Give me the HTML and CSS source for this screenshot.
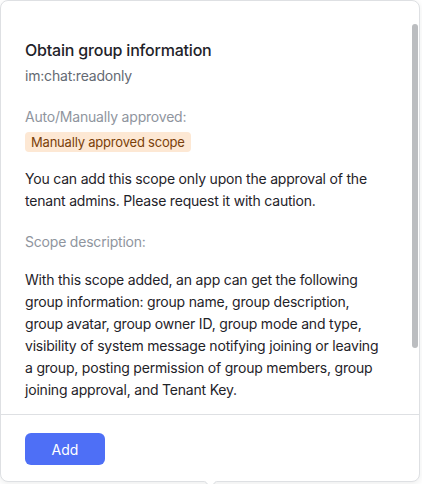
FILE: index.html
```html
<!DOCTYPE html>
<html lang="en">
<head>
<meta charset="utf-8">
<title>Obtain group information</title>
<link rel="stylesheet" href="styles.css">
</head>
<body>
<div class="card">
  <div class="content">
    <h2 class="title">Obtain group information</h2>
    <div class="code">im:chat:readonly</div>
    <div class="label">Auto/Manually approved:</div>
    <div class="tag">Manually approved scope</div>
    <p class="text">You can add this scope only upon the approval of the tenant admins. Please request it with caution.</p>
    <div class="label">Scope description:</div>
    <p class="text">With this scope added, an app can get the following group information: group name, group description, group avatar, group owner ID, group mode and type, visibility of system message notifying joining or leaving a group, posting permission of group members, group joining approval, and Tenant Key.</p>
  </div>
  <div class="footer">
    <button class="btn">Add</button>
  </div>
  <div class="scroll-thumb"></div>
  <div class="arrow"></div>
</div>
</body>
</html>
```
FILE: styles.css
```css
html, body {
  margin: 0;
  padding: 0;
  background: #ffffff;
}
body {
  font-family: Inter, "Noto Sans", "Liberation Sans", sans-serif;
  color: #1f2329;
  width: 422px;
  height: 484px;
  overflow: hidden;
  letter-spacing: -0.2px;
}
.card {
  position: relative;
  width: 420px;
  height: 482px;
  box-sizing: border-box;
  border: 1px solid #dee0e3;
  border-radius: 8px;
  background: #fff;
  box-shadow: 0 2px 6px rgba(31, 35, 41, 0.08);
  display: flex;
  flex-direction: column;
}
.content {
  flex: 1;
  overflow: hidden;
  padding: 37px 32px 0 24px;
}
.title {
  margin: 0;
  font-size: 16px;
  line-height: 24px;
  font-weight: 500;
  color: #1f2329;
}
.code {
  margin-top: 3px;
  font-size: 14px;
  line-height: 22px;
  color: #646a73;
}
.label {
  margin-top: 19px;
  font-size: 14px;
  line-height: 22px;
  color: #8f959e;
}
.tag {
  width: fit-content;
  margin-top: 4px;
  padding: 0 6px;
  height: 20px;
  line-height: 20px;
  font-size: 13px;
  border-radius: 4px;
  background: #fde8d4;
  color: #7a3f0a;
}
.text {
  margin: 16px 0 0 0;
  font-size: 14px;
  line-height: 22px;
  color: #1f2329;
}
.footer {
  border-top: 1px solid #dee0e3;
  padding: 18px 24px 16px 24px;
}
.btn {
  width: 80px;
  height: 32px;
  border: none;
  border-radius: 6px;
  background: #4e6ff6;
  color: #fff;
  font-family: inherit;
  font-size: 14px;
  letter-spacing: 0;
  display: block;
}
.scroll-thumb {
  position: absolute;
  right: 1px;
  top: 23px;
  width: 6px;
  height: 324px;
  border-radius: 3px;
  background: #bbbdc0;
}
.arrow {
  position: absolute;
  left: 205px;
  bottom: -5px;
  width: 8px;
  height: 8px;
  background: #fff;
  border-right: 1px solid #dee0e3;
  border-bottom: 1px solid #dee0e3;
  transform: rotate(45deg);
}
```
